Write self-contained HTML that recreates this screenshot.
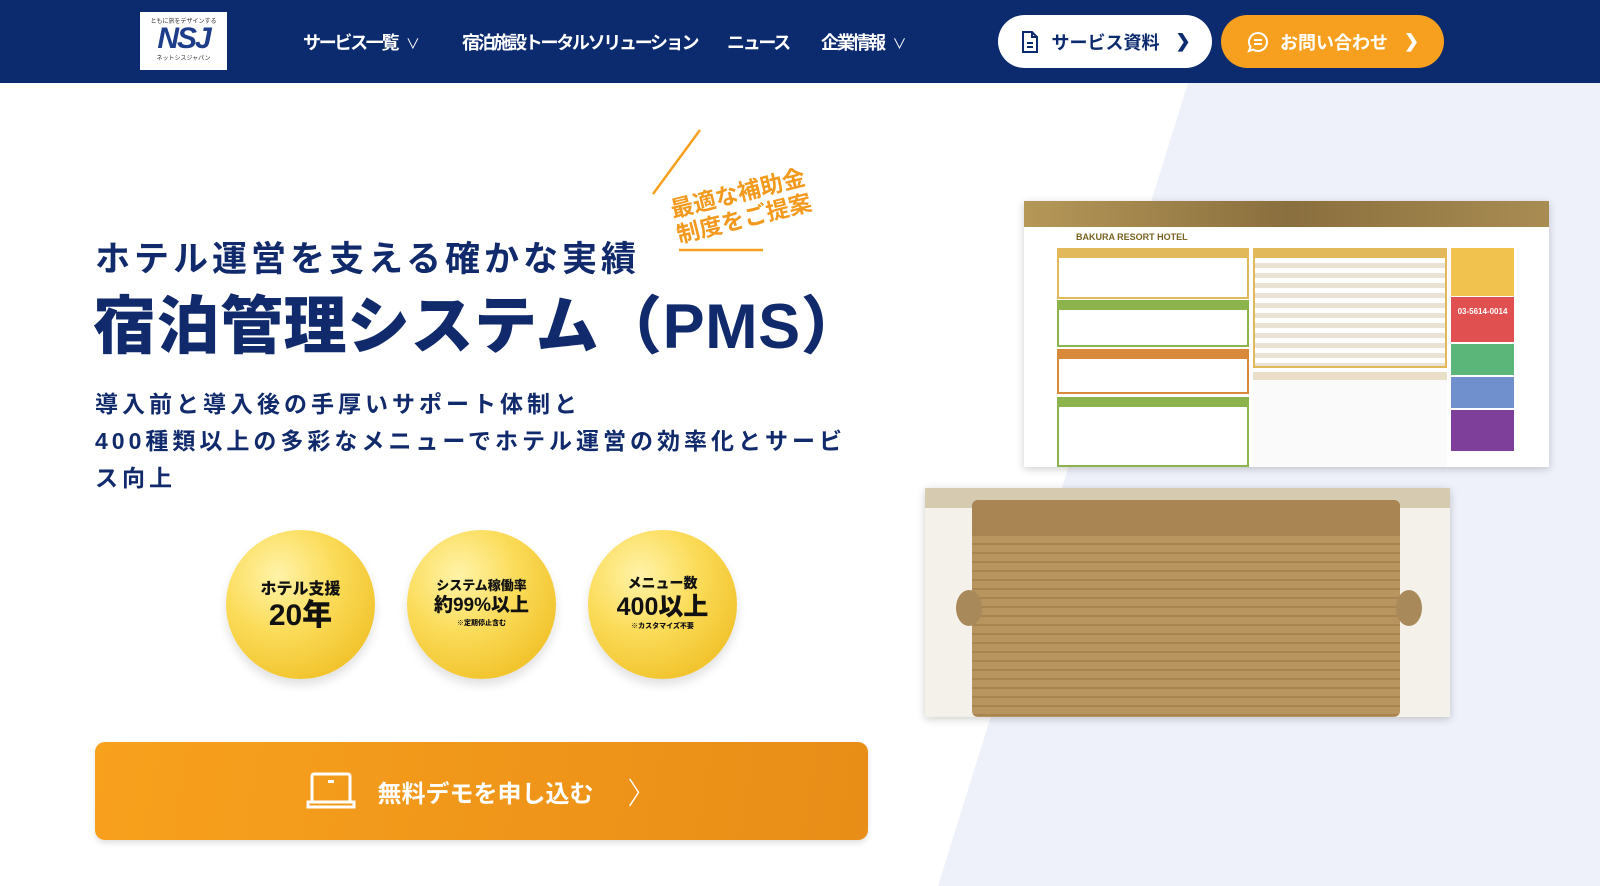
<!DOCTYPE html>
<html><head><meta charset="utf-8">
<style>
*{margin:0;padding:0;box-sizing:border-box}
body{width:1600px;height:886px;overflow:hidden;background:#fff;font-family:"Liberation Sans","Noto Sans CJK JP",sans-serif;position:relative;color:#102a6b}
.hdr{position:absolute;left:0;top:0;width:1600px;height:83px;background:#0c2a6e}
.logo{position:absolute;left:140px;top:12px;width:87px;height:58px;background:#fff;text-align:center}
.logo .s{font-size:6px;color:#333;margin-top:4px}
.logo .b{font-size:30px;font-weight:900;color:#1d3c8a;line-height:28px;letter-spacing:-2px;font-style:italic}
.logo .k{font-size:6px;color:#333}
.nav{position:absolute;top:29px;color:#fff;font-size:18px;font-weight:700;white-space:nowrap;letter-spacing:-2.3px}
.btn{position:absolute;top:15px;height:53px;border-radius:27px;font-size:18px;font-weight:700;display:flex;align-items:center;justify-content:center;gap:10px}
.bg{position:absolute;left:0;top:83px;width:1600px;height:803px}
.h1{position:absolute;left:95px;top:231px;font-size:35px;font-weight:700;letter-spacing:4px;white-space:nowrap}
.h2{position:absolute;left:93px;top:276px;font-size:63px;font-weight:900;letter-spacing:0.5px;white-space:nowrap}
.p{position:absolute;left:95px;top:386px;font-size:23px;font-weight:700;letter-spacing:4px;line-height:37px;white-space:nowrap}
.medal{position:absolute;top:530px;width:149px;height:149px;border-radius:50%;background:radial-gradient(circle at 35% 30%,#fff3a8 0%,#fbdc5a 40%,#f1c22a 80%,#e9b31c 100%);box-shadow:0 6px 10px rgba(0,0,0,.12);text-align:center;color:#111;font-weight:900}
.cta{position:absolute;left:95px;top:742px;width:773px;height:98px;border-radius:10px;background:linear-gradient(100deg,#f8a11d,#e88d17);box-shadow:0 3px 6px rgba(0,0,0,.12);color:#fff;font-size:24px;font-weight:700;display:flex;align-items:center;justify-content:center;gap:22px}
.shot{position:absolute;background:#fff;box-shadow:0 2px 8px rgba(0,0,0,.2);overflow:hidden}
</style></head><body>
<svg class="bg" width="1600" height="803"><polygon points="1188,0 1600,0 1600,803 938,803" fill="#eef1fa"/></svg>
<div class="hdr">
 <div class="logo"><div class="s">ともに旅をデザインする</div><div class="b">NSJ</div><div class="k">ネットシスジャパン</div></div>
 <div class="nav" style="left:303px">サービス一覧 <span style="font-weight:400;font-size:14px;margin-left:6px">&#8744;</span></div>
 <div class="nav" style="left:462px">宿泊施設トータルソリューション</div>
 <div class="nav" style="left:727px">ニュース</div>
 <div class="nav" style="left:821px">企業情報 <span style="font-weight:400;font-size:14px;margin-left:6px">&#8744;</span></div>
 <div class="btn" style="left:998px;width:214px;background:#fff;color:#0c2a6e">
  <svg width="22" height="24" viewBox="0 0 22 24" fill="none" stroke="#0c2a6e" stroke-width="2"><path d="M4 2h9l5 5v15H4z M13 2v5h5 M8 13h6 M8 17h6"/></svg>サービス資料 <span style="margin-left:6px">&#x276F;</span></div>
 <div class="btn" style="left:1221px;width:223px;background:#f7a020;color:#fff">
  <svg width="24" height="24" viewBox="0 0 24 24" fill="none" stroke="#fff" stroke-width="2"><path d="M12 3a9 9 0 1 1-5 16.5L3 21l1.5-4A9 9 0 0 1 12 3z M8 10h8 M8 14h8"/></svg>お問い合わせ <span style="margin-left:6px">&#x276F;</span></div>
</div>

<svg style="position:absolute;left:640px;top:120px" width="140" height="140"><line x1="13" y1="74" x2="60" y2="10" stroke="#f7a020" stroke-width="2.5"/><line x1="39" y1="130" x2="123" y2="130" stroke="#f7a020" stroke-width="2.5"/></svg>
<div style="position:absolute;left:672px;top:180px;transform:rotate(-14deg);color:#f39a1e;font-size:23px;font-weight:700;line-height:26px;white-space:nowrap">最適な補助金<br>制度をご提案</div>

<div class="h1">ホテル運営を支える確かな実績</div>
<div class="h2">宿泊管理システム（PMS）</div>
<div class="p">導入前と導入後の手厚いサポート体制と<br>400種類以上の多彩なメニューでホテル運営の効率化とサービ<br>ス向上</div>

<div class="medal" style="left:226px"><div style="font-size:16px;margin-top:45px">ホテル支援</div><div style="font-size:30px;line-height:34px">20年</div></div>
<div class="medal" style="left:407px"><div style="font-size:13px;margin-top:45px">システム稼働率</div><div style="font-size:19px;line-height:24px">約99%以上</div><div style="font-size:7px">※定期停止含む</div></div>
<div class="medal" style="left:588px"><div style="font-size:14px;margin-top:43px">メニュー数</div><div style="font-size:25px;line-height:28px">400以上</div><div style="font-size:7px">※カスタマイズ不要</div></div>

<div class="cta"><svg width="50" height="38" viewBox="0 0 50 38" fill="none" stroke="#fff" stroke-width="3"><rect x="6" y="2" width="38" height="28" rx="2"/><path d="M2 30h46v5H2z"/><rect x="22" y="8" width="6" height="3" fill="#fff" stroke="none"/></svg><span style="letter-spacing:0px">無料デモを申し込む</span><span style="font-size:30px;font-weight:300;margin-left:12px">〉</span></div>

<div class="shot" style="left:1024px;top:201px;width:525px;height:266px">
 <div style="height:26px;background:linear-gradient(90deg,#b59858,#8a6f3e,#a88c52)"></div>
 <div style="position:absolute;left:52px;top:31px;font-size:9px;font-weight:700;color:#7a6220">BAKURA RESORT HOTEL</div>
 <div style="position:absolute;left:33px;top:47px;width:192px;height:51px;border:2px solid #e1b95a;border-top-width:10px"></div>
 <div style="position:absolute;left:33px;top:99px;width:192px;height:47px;border:2px solid #8cb34c;border-top-width:10px"></div>
 <div style="position:absolute;left:33px;top:148px;width:192px;height:45px;border:2px solid #d8893a;border-top-width:10px"></div>
 <div style="position:absolute;left:33px;top:196px;width:192px;height:70px;border:2px solid #8cb34c;border-top-width:10px"></div>
 <div style="position:absolute;left:229px;top:47px;width:194px;height:120px;border:2px solid #e1b95a;border-top-width:10px;background:repeating-linear-gradient(#fff 0 5px,#eae2d2 5px 10px)"></div>
 <div style="position:absolute;left:229px;top:171px;width:194px;height:95px;border-top:8px solid #e9dfc9;background:#fafafa"></div>
 <div style="position:absolute;left:427px;top:47px;width:63px;height:48px;background:#f2c24f"></div>
 <div style="position:absolute;left:427px;top:96px;width:63px;height:45px;background:#e05050;color:#fff;font-size:8px;font-weight:700;text-align:center;padding-top:10px">03-5614-0014</div>
 <div style="position:absolute;left:427px;top:143px;width:63px;height:31px;background:#5bb67a"></div>
 <div style="position:absolute;left:427px;top:176px;width:63px;height:31px;background:#6f8fcd"></div>
 <div style="position:absolute;left:427px;top:209px;width:63px;height:41px;background:#7e3f9b"></div>
</div>

<div class="shot" style="left:925px;top:488px;width:525px;height:229px;background:#f4f1ea">
 <div style="height:20px;background:#d6cbb0"></div>
 <div style="position:absolute;left:47px;top:12px;width:428px;height:217px;border-radius:6px;background-image:repeating-linear-gradient(#b8955e 0 7px,#a88450 7px 9px)"></div>
 <div style="position:absolute;left:47px;top:12px;width:428px;height:34px;background:#a88552;border-radius:6px 6px 0 0"></div>
 <div style="position:absolute;left:31px;top:102px;width:26px;height:36px;border-radius:50%;background:#a88a5a"></div>
 <div style="position:absolute;left:471px;top:102px;width:26px;height:36px;border-radius:50%;background:#a88a5a"></div>
</div>
</body></html>
